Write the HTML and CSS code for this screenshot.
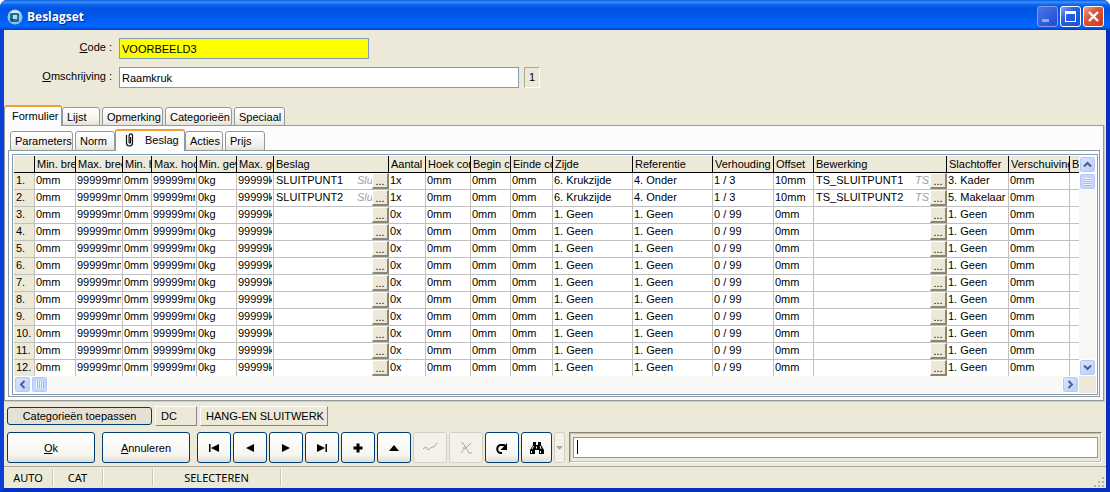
FILE: index.html
```html
<!DOCTYPE html>
<html lang="nl">
<head>
<meta charset="UTF-8">
<meta name="viewport" content="width=device-width, initial-scale=1.0">
<title>Beslagset</title>
<link rel="stylesheet" href="styles.css">
</head>
<body>
  <div class="window">
    <header class="titlebar">
      <svg class="app-icon" width="16" height="16" viewBox="0 0 16 16">
        <circle cx="8" cy="8" r="7.5" fill="#8fc3e0"/>
        <path d="M2 5a7 7 0 0 1 12 0q-6-3-12 0z" fill="#e4f3fb"/>
        <rect x="3" y="4" width="9" height="9" rx="1" fill="#1f6f9c"/>
        <rect x="6" y="6" width="4" height="4" fill="#b4deee"/>
        <path d="M3 10h3v3z" fill="#0d4a78"/>
      </svg>
      <h1>Beslagset</h1>
      <div class="window-buttons">
        <button class="win-btn minimize" aria-label="Minimaliseren">
          <svg width="19" height="19" viewBox="0 0 19 19"><rect x="4" y="12" width="7" height="3" fill="#8fa9ec"/></svg>
        </button>
        <button class="win-btn" aria-label="Maximaliseren">
          <svg width="19" height="19" viewBox="0 0 19 19"><path d="M4 4h11v11H4zM5 7v7h9V7z" fill="#fff" fill-rule="evenodd"/></svg>
        </button>
        <button class="win-btn close" aria-label="Sluiten">
          <svg width="19" height="19" viewBox="0 0 19 19"><path d="M5 5l9 9M14 5l-9 9" stroke="#fff" stroke-width="2.4"/></svg>
        </button>
      </div>
    </header>

    <main class="content">
      <form class="form">
        <div class="field">
          <label for="code"><u>C</u>ode :</label>
          <input class="text code" id="code" type="text" value="VOORBEELD3">
        </div>
        <div class="field">
          <label for="description"><u>O</u>mschrijving :</label>
          <input class="text description" id="description" type="text" value="Raamkruk">
          <output class="counter">1</output>
        </div>
      </form>

      <nav class="tabs">
        <button class="tab active w-formulier">Formulier</button>
        <button class="tab w-lijst">Lijst</button>
        <button class="tab w-opmerking">Opmerking</button>
        <button class="tab w-categorie">Categorieën</button>
        <button class="tab w-speciaal">Speciaal</button>
      </nav>

      <section class="panel">
        <nav class="tabs subtabs">
          <button class="tab w-parameters">Parameters</button>
          <button class="tab w-norm">Norm</button>
          <button class="tab active w-beslag">
            <svg width="10" height="14" viewBox="0 0 10 14"><path d="M1.500 2v8a3 3 0 0 0 6 0V2.500a1.700 1.700 0 0 0-3.400 0V9.500a.8.8 0 0 0 1.500 0V4" fill="none" stroke="#111" stroke-width="1.200"/></svg>
            Beslag
          </button>
          <button class="tab w-acties">Acties</button>
          <button class="tab w-prijs">Prijs</button>
        </nav>

        <div class="subpanel">
          <div class="grid-frame">
            <div class="grid-view">
              <table class="grid">
                <colgroup>
                  <col class="c-nr"><col class="c-minb"><col class="c-maxb"><col class="c-minh"><col class="c-maxh">
                  <col class="c-ming"><col class="c-maxg"><col class="c-beslag"><col class="c-aantal"><col class="c-hoek">
                  <col class="c-begin"><col class="c-einde"><col class="c-zijde"><col class="c-ref"><col class="c-verh">
                  <col class="c-offset"><col class="c-bewerking"><col class="c-slacht"><col class="c-versch"><col>
                </colgroup>
                <thead>
                  <tr id="head"></tr>
                </thead>
                <tbody id="rows"></tbody>
              </table>
            </div>
            <div class="vscroll">
              <button class="scroll-btn" aria-label="Omhoog"><svg width="9" height="9" viewBox="0 0 9 9"><path d="M1 6.500l3.500-3.500L8 6.500"/></svg></button>
              <div class="thumb"></div>
              <button class="scroll-btn last" aria-label="Omlaag"><svg width="9" height="9" viewBox="0 0 9 9"><path d="M1 2.500L4.500 6 8 2.500"/></svg></button>
            </div>
            <div class="hscroll">
              <button class="scroll-btn" aria-label="Links"><svg width="9" height="9" viewBox="0 0 9 9"><path d="M6.500 1L3 4.500 6.500 8"/></svg></button>
              <div class="thumb"></div>
              <button class="scroll-btn last" aria-label="Rechts"><svg width="9" height="9" viewBox="0 0 9 9"><path d="M2.500 1L6 4.500 2.500 8"/></svg></button>
            </div>
            <div class="corner"></div>
          </div>
        </div>
      </section>

      <div class="categories">
        <button class="btn apply">Categorieën toepassen</button>
        <span class="category dc">DC</span>
        <span class="category hang">HANG-EN SLUITWERK</span>
      </div>

      <div class="actions">
        <button class="btn wide"><span><u>O</u>k</span></button>
        <button class="btn wide"><span><u>A</u>nnuleren</span></button>
        <div class="toolbar">
          <button class="btn tool" aria-label="Eerste"><svg width="16" height="16" viewBox="0 0 16 16"><path d="M3 4h1.500v8H3zM13 4v8L5 8z"/></svg></button>
          <button class="btn tool" aria-label="Vorige"><svg width="16" height="16" viewBox="0 0 16 16"><path d="M12 4v8L4 8z"/></svg></button>
          <button class="btn tool" aria-label="Volgende"><svg width="16" height="16" viewBox="0 0 16 16"><path d="M4 4v8l8-4z"/></svg></button>
          <button class="btn tool" aria-label="Laatste"><svg width="16" height="16" viewBox="0 0 16 16"><path d="M3 4v8l8-4zM11.500 4H13v8h-1.500z"/></svg></button>
          <button class="btn tool" aria-label="Toevoegen"><svg width="16" height="16" viewBox="0 0 16 16"><path d="M6.500 3.500h3v3h3v3h-3v3h-3v-3h-3v-3h3z"/></svg></button>
          <button class="btn tool" aria-label="Bewerken"><svg width="16" height="16" viewBox="0 0 16 16"><path d="M8 5l5 6H3z"/></svg></button>
          <button class="btn tool" aria-label="Opslaan" disabled><svg width="16" height="16" viewBox="0 0 16 16"><path d="M1 9l3-2 2 3 4-3h2l3-4" fill="none" stroke="#aca899"/></svg></button>
          <button class="btn tool" aria-label="Terugdraaien" disabled><svg width="16" height="16" viewBox="0 0 16 16"><path d="M3 3h2l6 10h3M13 3L8 8H4M7 8l-4 5" fill="none" stroke="#aca899"/></svg></button>
          <button class="btn tool" aria-label="Vernieuwen"><svg width="16" height="16" viewBox="0 0 16 16"><path d="M8 13H6.500A3.500 4 0 0 1 7 5h3l2 2" fill="none" stroke="#000" stroke-width="2"/><path d="M13 3v7H6.500z"/></svg></button>
          <button class="btn tool search" aria-label="Zoeken"><svg width="16" height="16" viewBox="0 0 16 16"><path d="M4 2h3v3h2V2h3v3l3 5v4h-5v-4H6v4H1v-4l3-5z"/><path d="M4.500 6L3 9M11 6l1 3M2.500 11v2M11.500 11v2M7.500 6.500v2" stroke="#fff" fill="none"/></svg></button>
          <button class="btn drop" aria-label="Zoekopties" disabled><svg width="7" height="4" viewBox="0 0 7 4"><path d="M0 0h7L3.500 4z" fill="#aca899"/></svg></button>
        </div>
        <div class="search-box">
          <input class="text" type="text" aria-label="Zoektekst">
          <i class="caret"></i>
        </div>
      </div>
    </main>

    <footer class="statusbar">
      <span class="s-auto">AUTO</span>
      <span class="s-cat">CAT</span>
      <span class="s-empty"></span>
      <span class="s-mode">SELECTEREN</span>
      <svg class="grip" width="12" height="12" viewBox="0 0 12 12"><path d="M9 1h2v2H9zM5 5h2v2H5zM9 5h2v2H9zM1 9h2v2H1zM5 9h2v2H5zM9 9h2v2H9z" fill="#b8b4a2"/></svg>
    </footer>
  </div>

  <script>
    const headers = ["", "Min. breedte", "Max. breedte", "Min. hoogte", "Max. hoogte", "Min. gewicht",
      "Max. gewicht", "Beslag", "Aantal", "Hoek correctie", "Begin correctie", "Einde correctie", "Zijde", "Referentie",
      "Verhouding", "Offset", "Bewerking", "Slachtoffer", "Verschuiving", "B"];

    const filled = [
      { beslag: "SLUITPUNT1", bewerking: "TS_SLUITPUNT1", slachtoffer: "3. Kader" },
      { beslag: "SLUITPUNT2", bewerking: "TS_SLUITPUNT2", slachtoffer: "5. Makelaar" }
    ];

    function lookup(code, note) {
      return `<div class="lookup"><span class="code-text">${code}</span><i>${note}</i><button class="more">...</button></div>`;
    }

    function cell(value) {
      return `<td><div>${value}</div></td>`;
    }

    document.getElementById("head").innerHTML = headers.map(h => `<th><div>${h}</div></th>`).join("");

    let html = "";
    for (let i = 0; i < 12; i++) {
      const item = filled[i];
      html += `<tr><th><div>${i + 1}.</div></th>`;
      html += ["0mm", "99999mm", "0mm", "99999mm", "0kg", "99999kg"].map(cell).join("");
      html += `<td class="lookup-cell">${item ? lookup(item.beslag, "Sluit") : lookup("", "")}</td>`;
      html += [item ? "1x" : "0x", "0mm", "0mm", "0mm"].map(cell).join("");
      html += (item ? ["6. Krukzijde", "4. Onder", "1 / 3", "10mm"] : ["1. Geen", "1. Geen", "0 / 99", "0mm"]).map(cell).join("");
      html += `<td class="lookup-cell">${item ? lookup(item.bewerking, "TS_") : lookup("", "")}</td>`;
      html += [item ? item.slachtoffer : "1. Geen", "0mm", ""].map(cell).join("");
      html += "</tr>";
    }
    document.getElementById("rows").innerHTML = html;
  </script>
</body>
</html>
```
FILE: styles.css
```css
* {
  box-sizing: border-box;
}

body {
  margin: 0;
  background: #fff;
  font-family: "Liberation Sans", Arial, sans-serif;
  font-size: 11px;
  line-height: 14px;
  color: #000;
}

button,
input {
  margin: 0;
  padding: 0;
  font: inherit;
  color: inherit;
}

svg {
  display: block;
  flex: none;
}

.window {
  display: flex;
  flex-direction: column;
  min-height: 100vh;
  border: 4px solid #0a3fd8;
  border-top: 0;
  border-right-color: #0830c0;
  border-bottom-color: #0830c0;
  border-radius: 7px 7px 0 0;
  background: #0a3fd8;
}

/* title bar */
.titlebar {
  display: flex;
  align-items: center;
  height: 30px;
  margin: 0 -4px;
  padding: 3px 6px 0 7px;
  border-radius: 7px 7px 0 0;
  background: linear-gradient(#0a5be0 0, #3a91ff 2px, #0a62ee 5px, #0054e3 9px, #0058ea 16px, #0066ff 24px, #0060f8 27px, #0040c8 30px);
}

.titlebar h1 {
  flex: 1;
  margin: 0 0 0 4px;
  font-family: "Open Sans", "Noto Sans", sans-serif;
  font-size: 12px;
  line-height: 18px;
  font-weight: bold;
  color: #fff;
  text-shadow: 1px 1px 1px #0a1f80;
}

.window-buttons {
  display: flex;
  gap: 2px;
}

.win-btn {
  width: 21px;
  height: 21px;
  border: 1px solid #fff;
  border-radius: 3px;
  background: linear-gradient(135deg, #7fa4f4, #2a5fe0 40%, #1c50d4);
}

.win-btn.minimize {
  border-color: #7d9cf0;
  background: linear-gradient(135deg, #4a74e4, #1f4cd4);
}

.win-btn.close {
  background: linear-gradient(135deg, #f0a088, #e0553a 40%, #c83a18);
}

/* form */
.content {
  flex: 1;
  display: flex;
  flex-direction: column;
  background: #ece9d8;
}

.form {
  display: flex;
  flex-direction: column;
  gap: 8px;
  padding: 8px 0 17px;
}

.field {
  display: flex;
}

.field label {
  width: 115px;
  padding: 2px 7px 0 0;
  text-align: right;
}

.text {
  height: 21px;
  padding: 0 2px;
  border: 1px solid #7f9db9;
  border-radius: 0;
  background: #fff;
}

.text.code {
  width: 250px;
  background: #ff0;
}

.text.description {
  width: 400px;
}

.counter {
  width: 16px;
  margin-left: 5px;
  border: 1px solid #aca899;
  border-right-color: #fff;
  border-bottom-color: #fff;
  line-height: 19px;
  text-align: center;
}

/* tabs */
.tabs {
  display: flex;
  align-items: flex-end;
  height: 21px;
  margin-bottom: -1px;
  position: relative;
}

.tab {
  height: 19px;
  margin-right: 2px;
  padding: 0 4px;
  border: 1px solid #919b9c;
  border-radius: 3px 3px 0 0;
  background: linear-gradient(#fff, #f3f3ec 70%, #e4e2d6);
  text-align: left;
  white-space: nowrap;
}

.tab.active {
  height: 21px;
  margin-right: 0;
  padding-bottom: 2px;
  border-top: 2px solid #f0a030;
  border-bottom: 0;
  background: #fcfcfe;
}

.subtabs {
  height: 22px;
  padding-left: 2px;
}

.subtabs .tab {
  height: 20px;
}

.subtabs .tab.active {
  display: flex;
  align-items: center;
  gap: 10px;
  height: 22px;
  padding-left: 9px;
}

.w-formulier { width: 58px; padding-left: 7px; }
.w-lijst { width: 38px; }
.w-opmerking { width: 61px; }
.w-categorie { width: 67px; }
.w-speciaal { width: 51px; }
.w-parameters { width: 63px; }
.w-norm { width: 40px; margin-right: 0; }
.w-beslag { width: 70px; }
.w-acties { width: 38px; }
.w-prijs { width: 40px; }

.panel {
  margin-right: 2px;
  padding: 3px;
  border: 1px solid #919b9c;
  background: #fcfcfe;
  box-shadow: 1px 1px 0 #d0cdbe;
}

.subpanel {
  padding: 3px 1px 1px 3px;
  border: 1px solid #919b9c;
}

/* grid */
.grid-frame {
  display: grid;
  grid-template-columns: minmax(0, 1fr) 17px;
  grid-template-rows: auto 17px;
  padding: 1px;
  border: 1px solid #7f9db9;
  background: #fff;
}

.grid-view {
  overflow: hidden;
}

.grid {
  width: 100%;
  table-layout: fixed;
  border-collapse: separate;
  border-spacing: 0;
}

.grid th,
.grid td {
  height: 17px;
  padding: 0 1px;
  border-right: 1px solid #c0c0c0;
  border-bottom: 1px solid #c0c0c0;
  font-weight: normal;
  text-align: left;
  vertical-align: top;
}

.grid th {
  background: #ece9d8;
}

.grid thead th {
  padding: 0 0 0 2px;
  border-color: #000;
}

.grid th > div,
.grid td > div {
  height: 16px;
  overflow: hidden;
  white-space: nowrap;
  line-height: 15px;
}

.grid thead th > div {
  line-height: 17px;
}

.grid tbody th > div {
  padding-left: 1px;
}

.grid td:last-child,
.grid th:last-child:not(:first-child) {
  border-right: 0;
}

.grid tbody tr:last-child > * {
  height: 16px;
  border-bottom: 0;
}

.c-nr { width: 21px; }
.c-minb { width: 41px; }
.c-maxb { width: 47px; }
.c-minh { width: 29px; }
.c-maxh { width: 45px; }
.c-ming { width: 40px; }
.c-maxg { width: 37px; }
.c-beslag { width: 115px; }
.c-aantal { width: 37px; }
.c-hoek { width: 45px; }
.c-begin { width: 40px; }
.c-einde { width: 42px; }
.c-zijde { width: 80px; }
.c-ref { width: 80px; }
.c-verh { width: 61px; }
.c-offset { width: 40px; }
.c-bewerking { width: 133px; }
.c-slacht { width: 62px; }
.c-versch { width: 61px; }

.grid .lookup-cell {
  padding: 0 0 0 2px;
  border-right: 0;
}

.grid .lookup {
  display: flex;
}

.code-text {
  flex: 1;
}

.lookup i {
  width: 15px;
  overflow: hidden;
  color: #a0a0a0;
}

.more {
  width: 17px;
  height: 16px;
  border: 1px solid #fff;
  border-right: 2px solid #8a8776;
  border-bottom: 2px solid #8a8776;
  background: #ece9d8;
  line-height: 10px;
}

/* scroll bars */
.vscroll,
.hscroll {
  display: flex;
  background: #f8f8f4;
}

.vscroll {
  flex-direction: column;
}

.scroll-btn {
  display: flex;
  align-items: center;
  justify-content: center;
  width: 17px;
  height: 17px;
  border: 1px solid #fff;
  border-radius: 3px;
  background: linear-gradient(135deg, #dbe6ff, #b8ccfa);
  box-shadow: inset 0 0 0 1px #b4c8f6;
}

.scroll-btn path {
  fill: none;
  stroke: #4d6185;
  stroke-width: 2;
}

.vscroll .last {
  margin-top: auto;
}

.hscroll .last {
  margin-left: auto;
}

.thumb {
  width: 17px;
  height: 17px;
  border: 1px solid #fff;
  border-radius: 3px;
  background:
    repeating-linear-gradient(#eef4ff 0 1px, #9db8ee 1px 2px) center / 7px 8px no-repeat,
    #c8d6fb;
  box-shadow: inset 0 0 0 1px #b4c8f6;
}

.hscroll .thumb {
  background:
    repeating-linear-gradient(90deg, #eef4ff 0 1px, #9db8ee 1px 2px) center / 8px 7px no-repeat,
    #c8d6fb;
}

.corner {
  background: #ece9d8;
}

/* bottom area */
.btn {
  display: flex;
  align-items: center;
  justify-content: center;
  border: 1px solid #003c74;
  border-radius: 3px;
  background: linear-gradient(#fff, #f6f5f0 75%, #e2dfd2);
}

.btn:disabled {
  border-color: #d4d1c2;
  background: #f3f2ea;
}

.categories {
  display: flex;
  align-items: center;
  gap: 3px;
  padding: 5px 3px 0;
}

.apply {
  width: 145px;
  height: 18px;
  background: #e4e1d4;
}

.category {
  height: 20px;
  padding-left: 5px;
  border: 1px solid #fff;
  border-right-color: #8a8776;
  border-bottom-color: #8a8776;
  line-height: 18px;
}

.category.dc {
  width: 42px;
}

.category.hang {
  width: 128px;
}

.actions {
  display: flex;
  gap: 7px;
  padding: 6px 4px 3px 3px;
}

.wide {
  width: 88px;
  height: 31px;
}

.toolbar {
  display: flex;
  gap: 2px;
}

.tool {
  width: 34px;
  height: 31px;
}

.tool.search {
  width: 31px;
}

.drop {
  width: 11px;
  height: 31px;
}

.search-box {
  flex: 1;
  position: relative;
  height: 31px;
  margin-left: -3px;
  padding: 4px 3px;
  border: 1px solid #fff;
  border-top-color: #8a8776;
  border-left-color: #8a8776;
  box-shadow: inset -1px -1px 0 #c4c1b0, inset 1px 1px 0 #c4c1b0;
}

.search-box .text {
  display: block;
  width: 100%;
}

.caret {
  position: absolute;
  left: 7px;
  top: 7px;
  width: 1px;
  height: 14px;
  background: #000;
}

/* status bar */
.statusbar {
  display: flex;
  height: 22px;
  border-top: 1px solid #aca899;
  background: #ece9d8;
  font-family: "Noto Sans", sans-serif;
  text-align: center;
}

.statusbar span {
  margin: 2px 0;
  border-right: 1px solid #c8c5b4;
  box-shadow: 1px 0 0 #fff;
  line-height: 18px;
}

.s-auto { width: 49px; }
.s-cat { width: 50px; }
.s-empty { width: 50px; }
.s-mode { width: 128px; }

.grip {
  margin: auto 1px 0 auto;
}
```
